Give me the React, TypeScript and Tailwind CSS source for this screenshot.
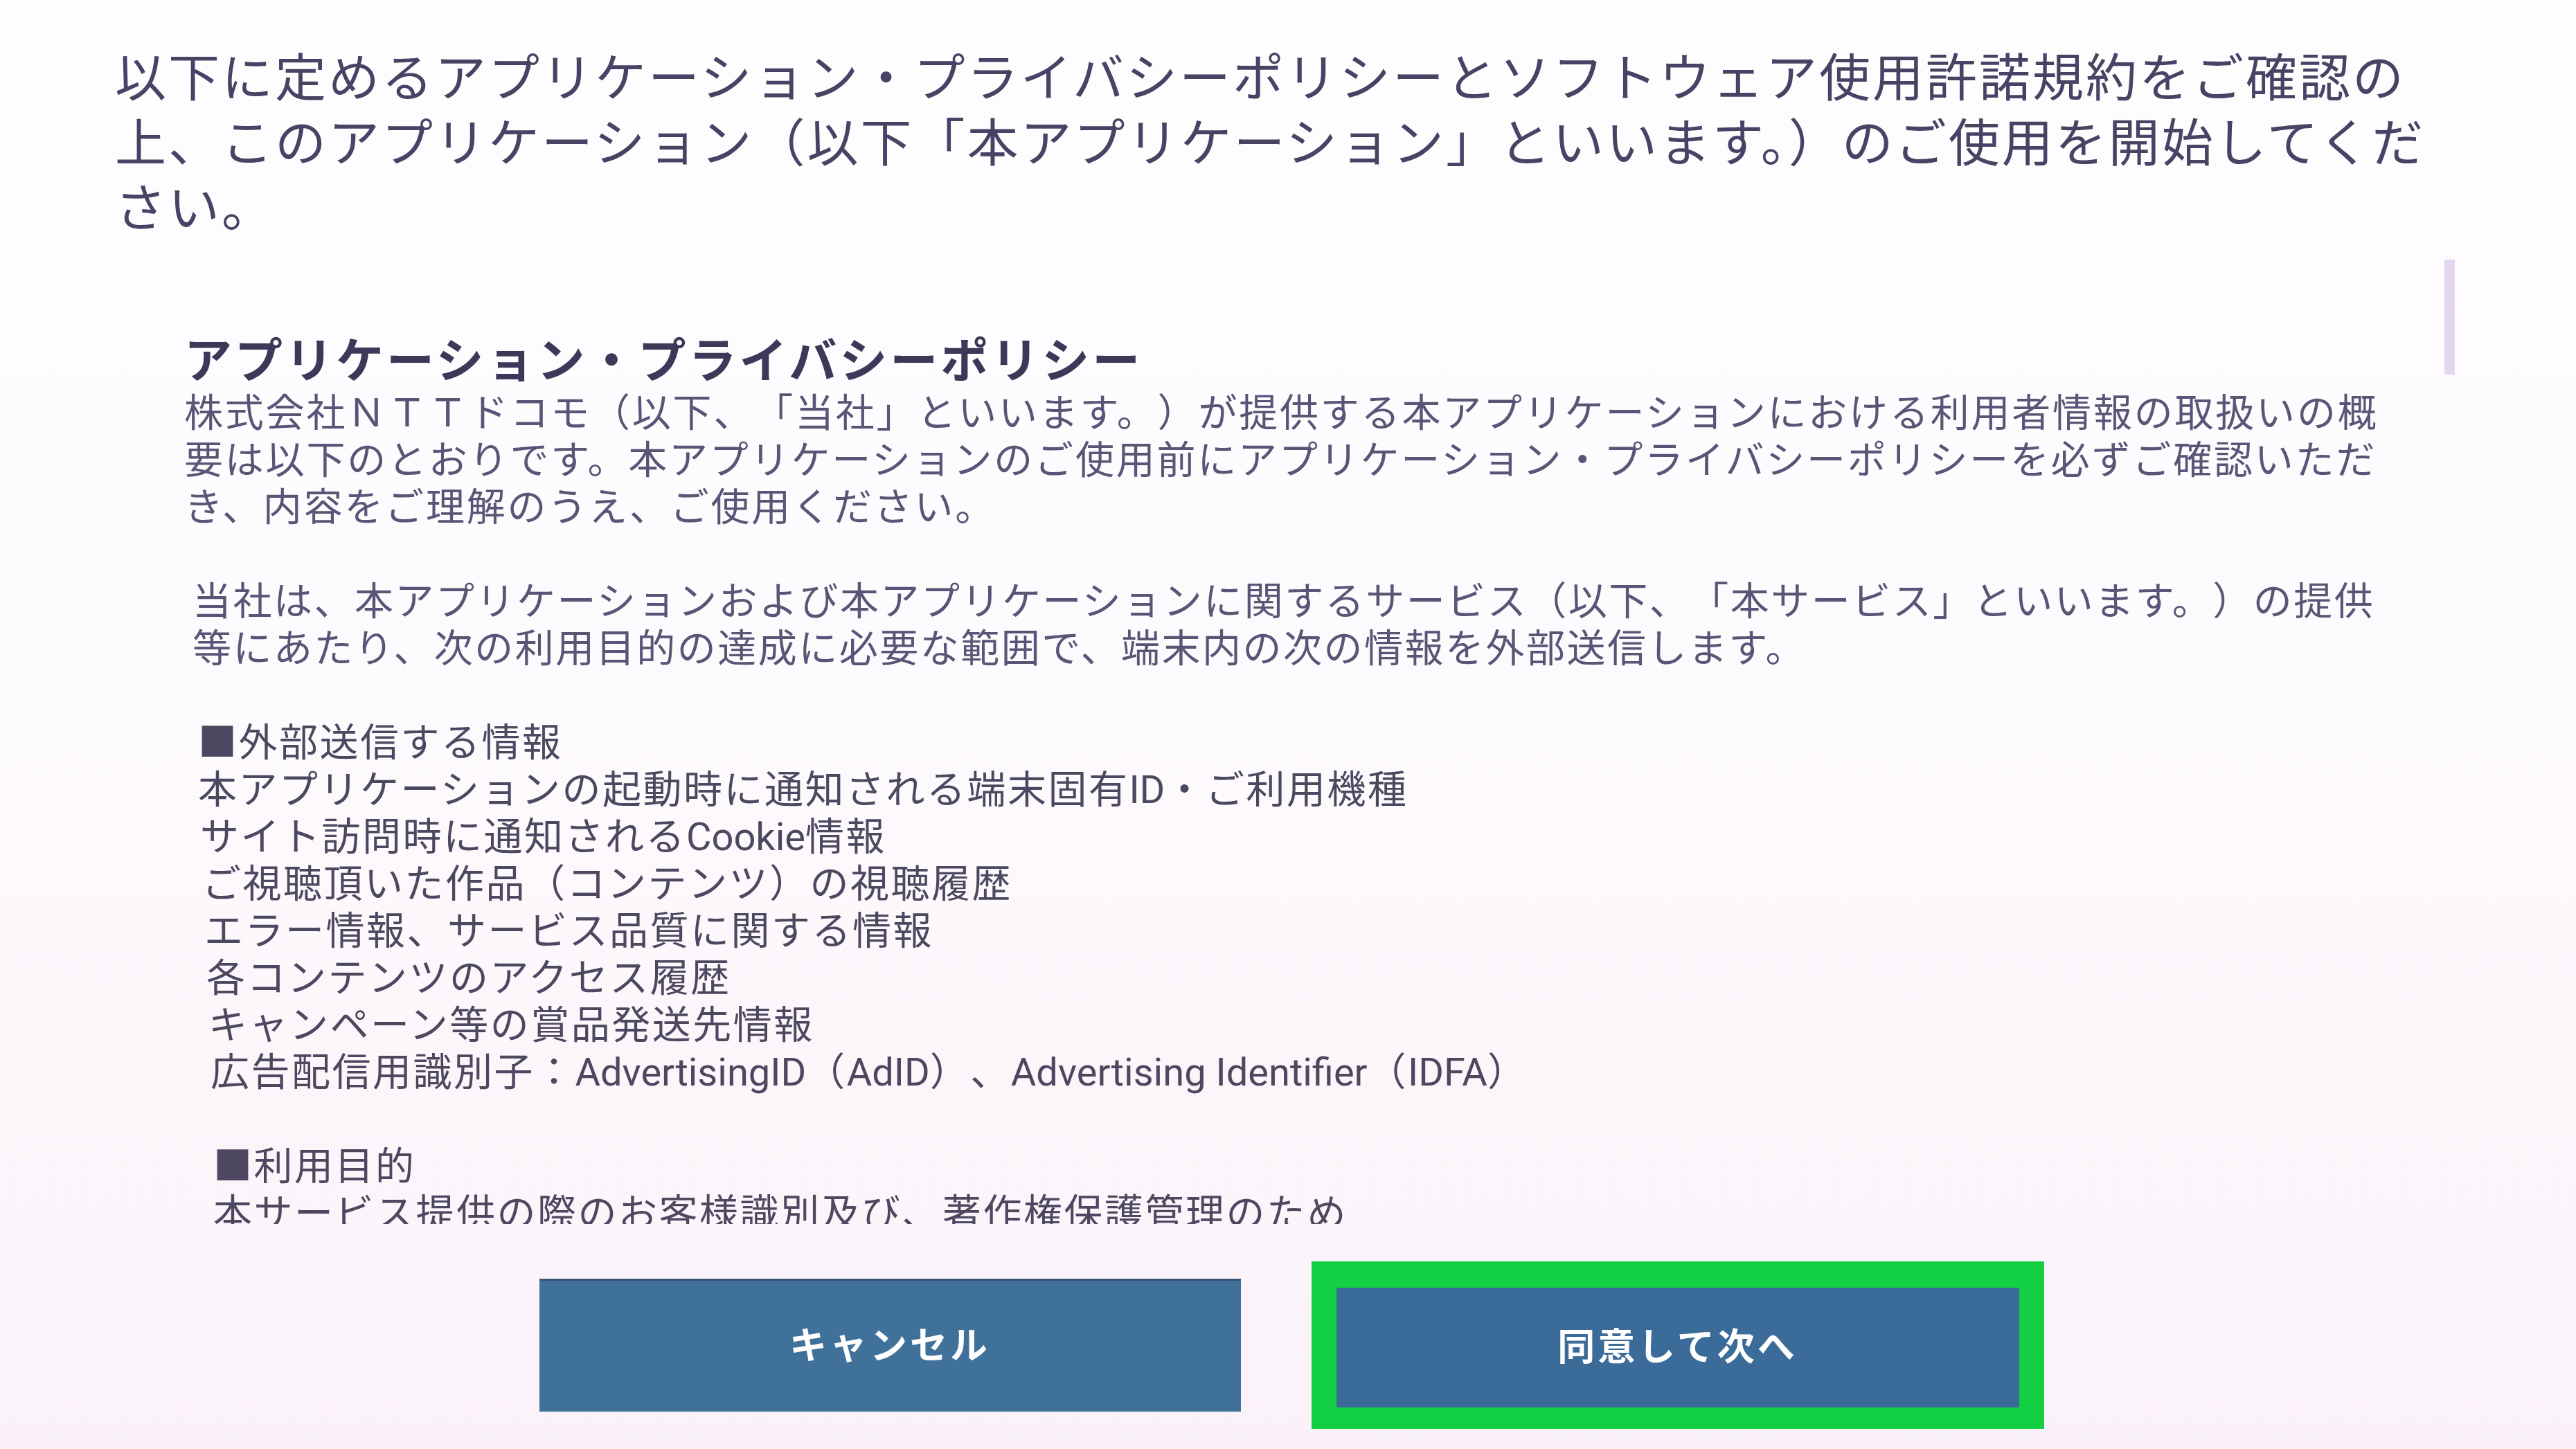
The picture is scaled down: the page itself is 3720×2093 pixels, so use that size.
import React from 'react';

const intro = [
  '以下に定めるアプリケーション・プライバシーポリシーとソフトウェア使用許諾規約をご確認の',
  '上、このアプリケーション（以下「本アプリケーション」といいます。）のご使用を開始してくだ',
  'さい。',
];

const para1 = [
  '株式会社ＮＴＴドコモ（以下、「当社」といいます。）が提供する本アプリケーションにおける利用者情報の取扱いの概',
  '要は以下のとおりです。本アプリケーションのご使用前にアプリケーション・プライバシーポリシーを必ずご確認いただ',
  'き、内容をご理解のうえ、ご使用ください。',
];

const para2 = [
  '当社は、本アプリケーションおよび本アプリケーションに関するサービス（以下、「本サービス」といいます。）の提供',
  '等にあたり、次の利用目的の達成に必要な範囲で、端末内の次の情報を外部送信します。',
];

// latin runs are set a little tighter, like the condensed system font on the TV
const sentInfo = [
  '本アプリケーションの起動時に通知される端末固有ID・ご利用機種',
  'サイト訪問時に通知されるCookie情報',
  'ご視聴頂いた作品（コンテンツ）の視聴履歴',
  'エラー情報、サービス品質に関する情報',
  '各コンテンツのアクセス履歴',
  'キャンペーン等の賞品発送先情報',
  '広告配信用識別子：AdvertisingID（AdID）、Advertising Identifier（IDFA）',
];

function Latin({ text }: { text: string }) {
  const parts = text.split(/([A-Za-z][A-Za-z ]*[A-Za-z]|[A-Za-z])/);
  return (
    <>
      {parts.map((p, i) =>
        /[A-Za-z]/.test(p) ? (
          <span key={i} className="tracking-[0px]">
            {p}
          </span>
        ) : (
          <span key={i}>{p}</span>
        )
      )}
    </>
  );
}

function Lines({ lines, className }: { lines: string[]; className?: string }) {
  return (
    <div className={className}>
      {lines.map((l, i) => (
        <div key={i} className="whitespace-nowrap">
          {l}
        </div>
      ))}
    </div>
  );
}

export default function App() {
  return (
    <div className="w-[3720px] h-[2093px] overflow-hidden flex flex-col bg-gradient-to-b from-[#fefdfe] via-[#fdfafd] to-[#fbf2f9] font-['Roboto','Noto_Sans_CJK_JP',sans-serif]">
      {/* intro */}
      <Lines
        lines={intro}
        className="pl-[166px] pt-[67px] text-[74px] leading-[94px] tracking-[3px] text-[#4a4264]"
      />

      {/* policy scroll area */}
      <div className="relative mt-[26px] h-[1393px] overflow-hidden">
        <div className="pl-[266px] pt-[108px] text-[56px] leading-[68px] tracking-[2.5px] text-[#5b5476] [text-spacing-trim:space-all]">
          <h2 className="text-[69px] leading-[80px] tracking-[4px] font-bold text-[#3d3758] whitespace-nowrap">
            アプリケーション・プライバシーポリシー
          </h2>
          <Lines lines={para1} className="tracking-[2.8px]" />
          <div className="h-[68px]" />
          <Lines lines={para2} className="pl-[12px]" />
          <div className="h-[68px]" />
          <div className="pl-[20px] text-[#4c4860]">
            <div className="whitespace-nowrap">■外部送信する情報</div>
            {sentInfo.map((s, i) => (
              <div key={i} className="whitespace-nowrap" style={{ paddingLeft: i * 3 }}>
                <Latin text={s} />
              </div>
            ))}
          </div>
          <div className="h-[68px]" />
          <div className="pl-[42px] text-[#4c4860]">
            <div className="whitespace-nowrap">■利用目的</div>
            <div className="whitespace-nowrap">本サービス提供の際のお客様識別及び、著作権保護管理のため</div>
          </div>
        </div>
        {/* scrollbar thumb */}
        <div className="absolute left-[3530px] top-0 w-[15px] h-[166px] bg-[#e3d7ef]" />
      </div>

      {/* buttons */}
      <div className="mt-[54px] flex items-center justify-center gap-[102px] pl-[10px]">
        <button className="w-[1013px] h-[192px] bg-[#40719a] border-t-[3px] border-[#3a5577] text-white text-[54px] font-bold tracking-[4px] flex items-center justify-center">
          キャンセル
        </button>
        <div className="w-[1058px] h-[242px] bg-[#12cf44] p-[36px] pt-[38px] pb-[31px]">
          <button className="w-full h-full bg-[#3b6b99] text-white text-[54px] font-bold tracking-[4px] flex items-center justify-center">
            同意して次へ
          </button>
        </div>
      </div>
    </div>
  );
}
